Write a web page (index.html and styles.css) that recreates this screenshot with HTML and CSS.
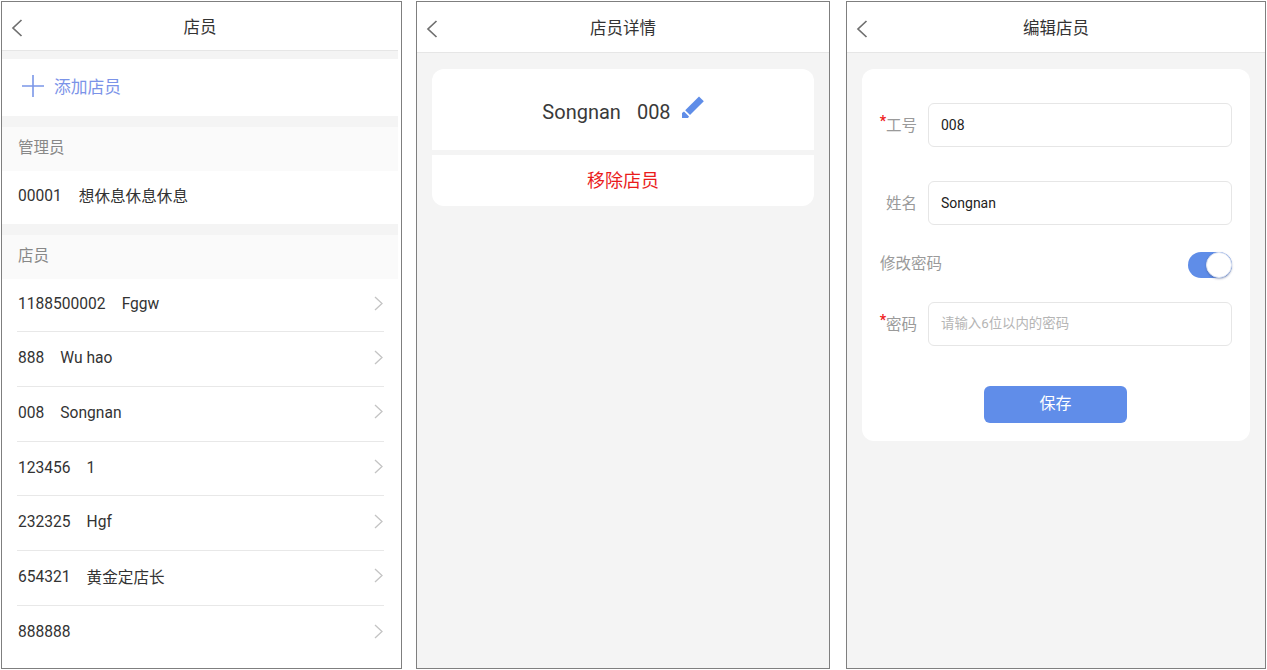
FILE: index.html
```html
<!DOCTYPE html>
<html lang="zh">
<head>
<meta charset="utf-8">
<title>店员</title>
<link rel="stylesheet" href="styles.css">
</head>
<body>
<main class="screens">
  <section class="phone phone-list">
    <header class="bar bar-list">
      <svg class="back" viewBox="0 0 12 18"><path d="M10.500 1 2 9l8.500 8"/></svg>
      <h1>店员</h1>
    </header>
    <div class="list-body">
      <div class="add-row">
        <svg class="plus" viewBox="0 0 22 22"><path d="M11 0v22M0 11h22"/></svg>
        <span>添加店员</span>
      </div>
      <div class="group-title">管理员</div>
      <div class="admin-row"><span class="code">00001</span><span class="cjk">想休息休息休息</span></div>
      <div class="group-title staff-title">店员</div>
      <ul class="staff">
        <li><span class="code">1188500002</span><span>Fggw</span><svg class="chev" viewBox="0 0 9 15"><path d="m1 1 7 6.500L1 14"/></svg></li>
        <li><span class="code">888</span><span>Wu hao</span><svg class="chev" viewBox="0 0 9 15"><path d="m1 1 7 6.500L1 14"/></svg></li>
        <li><span class="code">008</span><span>Songnan</span><svg class="chev" viewBox="0 0 9 15"><path d="m1 1 7 6.500L1 14"/></svg></li>
        <li><span class="code">123456</span><span>1</span><svg class="chev" viewBox="0 0 9 15"><path d="m1 1 7 6.500L1 14"/></svg></li>
        <li><span class="code">232325</span><span>Hgf</span><svg class="chev" viewBox="0 0 9 15"><path d="m1 1 7 6.500L1 14"/></svg></li>
        <li><span class="code">654321</span><span class="cjk">黄金定店长</span><svg class="chev" viewBox="0 0 9 15"><path d="m1 1 7 6.500L1 14"/></svg></li>
        <li><span class="code">888888</span><svg class="chev" viewBox="0 0 9 15"><path d="m1 1 7 6.500L1 14"/></svg></li>
      </ul>
    </div>
  </section>

  <section class="phone phone-detail">
    <header class="bar">
      <svg class="back" viewBox="0 0 12 18"><path d="M10.500 1 2 9l8.500 8"/></svg>
      <h1>店员详情</h1>
    </header>
    <div class="page">
      <div class="card detail-card">
        <div class="detail-name">
          <span>Songnan</span><span>008</span>
          <svg class="pencil" viewBox="0 0 24 23"><path d="M18 1.500 22.800 6.300 9 20 4.200 15.200Z"/><path d="M3 16.500 1 18v5h6l1-1.500Z"/></svg>
        </div>
        <div class="detail-remove">移除店员</div>
      </div>
    </div>
  </section>

  <section class="phone phone-edit">
    <header class="bar">
      <svg class="back" viewBox="0 0 12 18"><path d="M10.500 1 2 9l8.500 8"/></svg>
      <h1>编辑店员</h1>
    </header>
    <div class="page">
      <form class="card edit-card">
        <div class="field field-first">
          <label><i>*</i>工号</label>
          <div class="input">008</div>
        </div>
        <div class="field field-name">
          <label>姓名</label>
          <div class="input">Songnan</div>
        </div>
        <div class="toggle-row">
          <span class="toggle-label">修改密码</span>
          <span class="switch"><span class="knob"></span></span>
        </div>
        <div class="field">
          <label><i>*</i>密码</label>
          <div class="input placeholder">请输入6位以内的密码</div>
        </div>
        <div class="save">保存</div>
      </form>
    </div>
  </section>
</main>
</body>
</html>
```
FILE: styles.css
```css
* { box-sizing: border-box; }
html, body { margin: 0; height: 100%; background: #fff; }
body {
  font-family: Roboto, "Noto Sans CJK SC", sans-serif;
  color: #333;
  overflow: hidden;
}
ul { list-style: none; margin: 0; padding: 0; }
h1 { margin: 0; font-size: 16.500px; font-weight: 400; color: #333; }

.screens {
  display: flex;
  padding: 1px 0 0 1px;
  height: 670px;
}
.phone {
  height: 668px;
  border: 1px solid #7f7f7f;
  background: #fff;
  display: flex;
  flex-direction: column;
  overflow: hidden;
}
.phone-list { width: 401px; }
.phone-detail { width: 414px; margin-left: 14px; background: #f4f4f4; }
.phone-edit { width: 420px; margin-left: 16px; background: #f4f4f4; }

.bar {
  height: 51px;
  flex: none;
  background: #fff;
  border-bottom: 1px solid #e6e6e6;
  display: flex;
  align-items: center;
  justify-content: center;
  position: relative;
}
.bar-list { height: 49px; margin-right: 3px; }
.back {
  position: absolute;
  left: 9px;
  top: 18px;
  width: 12px;
  height: 18px;
  fill: none;
  stroke: #6f6f6f;
  stroke-width: 1.700;
}
.bar-list .back { top: 17px; }

.list-body {
  margin-right: 3px;
  background: #f4f4f4;
  padding-top: 8px;
  flex: 1;
}
.add-row {
  height: 57px;
  background: #fff;
  display: flex;
  align-items: center;
  padding: 0 0 3px 20px;
  gap: 10px;
  font-size: 16.800px;
  color: #7b93e8;
}
.plus {
  width: 22px;
  height: 22px;
  fill: none;
  stroke: #7b97e8;
  stroke-width: 1.600;
}
.group-title {
  margin-top: 11px;
  height: 44px;
  padding: 0 0 7px 16px;
  display: flex;
  align-items: center;
  background: #fafafa;
  font-size: 15.500px;
  color: #888;
}
.admin-row {
  height: 53px;
  background: #fff;
  padding: 0 0 3px 16px;
  display: flex;
  align-items: center;
  font-size: 15.600px;
  color: #333;
}
.code { margin-right: 17px; }
.cjk { margin-bottom: 2px; }
.staff { background: #fff; padding: 0 14px 0 15px; height: 400px; }
.staff li {
  height: 54.700px;
  border-bottom: 1px solid #e8e8e8;
  display: flex;
  align-items: center;
  padding: 0 0 2px 1px;
  font-size: 15.600px;
  color: #333;
}
.staff li:first-child { height: 53.400px; }
.staff li:last-child { border-bottom: 0; }
.staff .code { margin-right: 16px; }
.chev {
  margin: -2px 1px 0 auto;
  width: 9px;
  height: 15px;
  fill: none;
  stroke: #c4c4c4;
  stroke-width: 1.300;
}

.page { flex: 1; padding: 16px 15px; background: #f4f4f4; }
.card { background: #fff; border-radius: 12px; }
.detail-card {
  overflow: hidden;
  background: #f4f4f4;
}
.detail-name {
  height: 81px;
  background: #fff;
  display: flex;
  align-items: center;
  justify-content: center;
  gap: 16px;
  font-size: 20px;
  color: #3a3a3a;
  padding: 5px 0 0 1px;
}
.pencil {
  width: 24px;
  height: 23px;
  margin: -11px 0 0 -6px;
  fill: #5f8de8;
}
.detail-remove {
  margin-top: 5px;
  height: 51px;
  padding-bottom: 4px;
  background: #fff;
  display: flex;
  align-items: center;
  justify-content: center;
  font-size: 18px;
  color: #ea1c1c;
}

.edit-card {
  height: 372px;
  padding: 34px 18px 0 18px;
  display: flex;
  flex-direction: column;
}
.field {
  display: flex;
  align-items: center;
}
.field label {
  width: 48px;
  flex: none;
  font-size: 15.500px;
  color: #9a9a9a;
  white-space: nowrap;
  padding: 0 11px 3px 0;
  display: flex;
  justify-content: flex-end;
}
.field label i {
  color: #ef2020;
  font-style: normal;
  font-weight: 700;
  font-size: 14px;
}
.input {
  flex: 1;
  height: 44px;
  border: 1px solid #e6e6e6;
  border-radius: 6px;
  padding: 0 12px;
  display: flex;
  align-items: center;
  font-size: 14px;
  color: #222;
}
.input.placeholder { font-size: 13.400px; color: #b5b5b5; padding-bottom: 4px; }
.field-name { margin-top: 34px; }
.toggle-row {
  display: flex;
  align-items: center;
  justify-content: space-between;
  height: 77px;
  font-size: 15.500px;
  color: #9a9a9a;
}
.toggle-label { margin-bottom: 4px; }
.switch {
  width: 44px;
  height: 26px;
  margin-top: 3px;
  border-radius: 13px;
  background: #5f8de8;
  display: flex;
  justify-content: flex-end;
  align-items: center;
}
.knob {
  width: 26px;
  height: 26px;
  border-radius: 50%;
  background: #fff;
  border: 1px solid #dfe5f2;
  box-shadow: 0 1px 2px rgba(60, 80, 130, .45);
}
.save {
  align-self: center;
  width: 143px;
  height: 37px;
  margin: 40px 1px 0 0;
  padding-bottom: 6px;
  border-radius: 6px;
  background: #608de9;
  color: #fff;
  display: flex;
  align-items: center;
  justify-content: center;
  font-size: 16px;
}
```
